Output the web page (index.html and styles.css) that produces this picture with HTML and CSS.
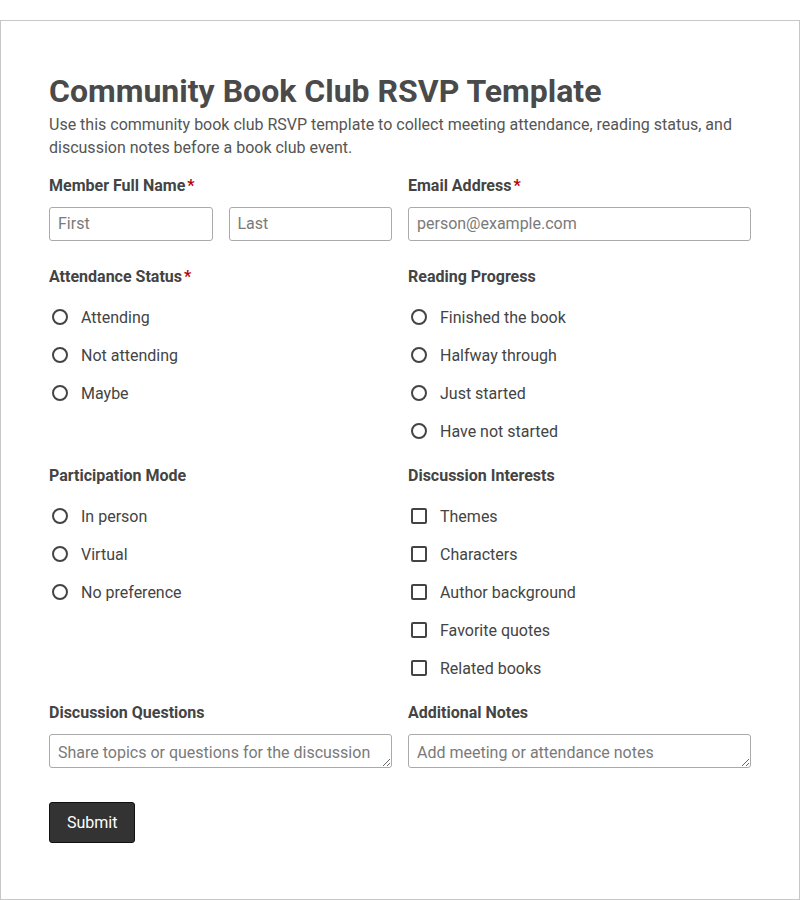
FILE: index.html
```html
<!DOCTYPE html>
<html lang="en">
<head>
<meta charset="utf-8">
<title>Community Book Club RSVP Template</title>
<link rel="stylesheet" href="styles.css">
</head>
<body>
<div class="page">
  <h1 class="title">Community Book Club RSVP Template</h1>
  <p class="desc">Use this community book club RSVP template to collect meeting attendance, reading status, and discussion notes before a book club event.</p>
  <form class="form">
    <div class="grid">
      <div class="field field-input">
        <div class="label">Member Full Name<span class="req">*</span></div>
        <div class="name-row">
          <input class="text" type="text" placeholder="First">
          <input class="text" type="text" placeholder="Last">
        </div>
      </div>
      <div class="field field-input">
        <div class="label">Email Address<span class="req">*</span></div>
        <input class="text" type="email" placeholder="person@example.com">
      </div>

      <div class="field">
        <div class="label">Attendance Status<span class="req">*</span></div>
        <div class="options">
          <label class="opt"><input type="radio" name="att" class="radio"><span>Attending</span></label>
          <label class="opt"><input type="radio" name="att" class="radio"><span>Not attending</span></label>
          <label class="opt"><input type="radio" name="att" class="radio"><span>Maybe</span></label>
        </div>
      </div>
      <div class="field">
        <div class="label">Reading Progress</div>
        <div class="options">
          <label class="opt"><input type="radio" name="rp" class="radio"><span>Finished the book</span></label>
          <label class="opt"><input type="radio" name="rp" class="radio"><span>Halfway through</span></label>
          <label class="opt"><input type="radio" name="rp" class="radio"><span>Just started</span></label>
          <label class="opt"><input type="radio" name="rp" class="radio"><span>Have not started</span></label>
        </div>
      </div>

      <div class="field">
        <div class="label">Participation Mode</div>
        <div class="options">
          <label class="opt"><input type="radio" name="pm" class="radio"><span>In person</span></label>
          <label class="opt"><input type="radio" name="pm" class="radio"><span>Virtual</span></label>
          <label class="opt"><input type="radio" name="pm" class="radio"><span>No preference</span></label>
        </div>
      </div>
      <div class="field">
        <div class="label">Discussion Interests</div>
        <div class="options">
          <label class="opt"><input type="checkbox" class="check"><span>Themes</span></label>
          <label class="opt"><input type="checkbox" class="check"><span>Characters</span></label>
          <label class="opt"><input type="checkbox" class="check"><span>Author background</span></label>
          <label class="opt"><input type="checkbox" class="check"><span>Favorite quotes</span></label>
          <label class="opt"><input type="checkbox" class="check"><span>Related books</span></label>
        </div>
      </div>

      <div class="field">
        <div class="label">Discussion Questions</div>
        <textarea class="area" rows="1" placeholder="Share topics or questions for the discussion"></textarea>
      </div>
      <div class="field">
        <div class="label">Additional Notes</div>
        <textarea class="area" rows="1" placeholder="Add meeting or attendance notes"></textarea>
      </div>
    </div>
    <button type="button" class="submit">Submit</button>
  </form>
</div>
</body>
</html>
```

FILE: styles.css
```css
html, body {
  margin: 0;
  padding: 0;
  background: #fff;
}
body {
  font-family: Roboto, "Liberation Sans", Arial, sans-serif;
  color: #444;
}
.page {
  margin-top: 20px;
  border: 1px solid #c8c8c8;
  padding: 48px;
  box-sizing: border-box;
  width: 800px;
  height: 880px;
}
.title {
  margin: 3px 0 3px;
  font-size: 32px;
  line-height: 38px;
  font-weight: 700;
  color: #4a4a4a;
}
.desc {
  margin: 0 0 16px;
  font-size: 16px;
  line-height: 23px;
  color: #555;
}
.grid {
  display: grid;
  grid-template-columns: 1fr 1fr;
  column-gap: 16px;
  row-gap: 15px;
}
.field-input {
  padding-bottom: 10px;
}
.label {
  font-size: 16px;
  line-height: 22px;
  font-weight: 700;
  color: #444;
  margin-bottom: 10px;
}
.req {
  color: #b00;
  margin-left: 2px;
}
.name-row {
  display: flex;
  gap: 16px;
}
.text, .area {
  display: block;
  box-sizing: border-box;
  width: 100%;
  height: 34px;
  border: 1px solid #aaa;
  border-radius: 3px;
  padding: 5px 8px 7px;
  font-family: Roboto, "Liberation Sans", Arial, sans-serif;
  font-size: 16px;
  color: #444;
  background: #fff;
  margin: 0;
}
.area {
  resize: vertical;
  line-height: 20px;
  padding: 8px 8px 4px;
  overflow: hidden;
}
.text::placeholder, .area::placeholder {
  color: #7a7a7a;
}
.options {
  display: flex;
  flex-direction: column;
}
.opt {
  display: flex;
  align-items: center;
  height: 38px;
  font-size: 16px;
  color: #444;
}
.radio, .check {
  appearance: none;
  -webkit-appearance: none;
  box-sizing: border-box;
  width: 16px;
  height: 16px;
  margin: 0 13px 0 3px;
  border: 2px solid #444;
  background: #fff;
  flex: none;
}
.radio {
  border-radius: 50%;
}
.check {
  border-radius: 2px;
}
.submit {
  display: block;
  margin-top: 34px;
  height: 41px;
  padding: 0 17px;
  background: #333;
  color: #fff;
  border: 1px solid #111;
  border-radius: 3px;
  font-family: Roboto, "Liberation Sans", Arial, sans-serif;
  font-size: 16px;
}
```
